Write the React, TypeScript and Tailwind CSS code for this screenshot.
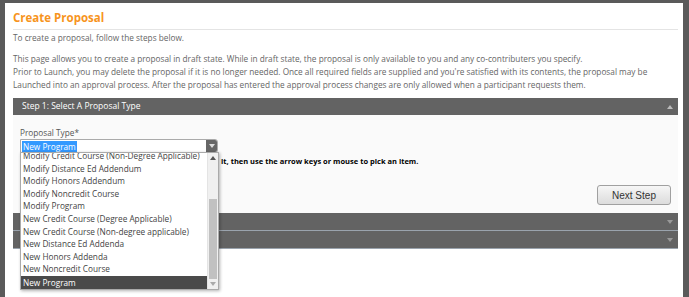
import React from "react";

const items = [
  "Modify Credit Course (Non-Degree Applicable)",
  "Modify Distance Ed Addendum",
  "Modify Honors Addendum",
  "Modify Noncredit Course",
  "Modify Program",
  "New Credit Course (Degree Applicable)",
  "New Credit Course (Non-degree applicable)",
  "New Distance Ed Addenda",
  "New Honors Addenda",
  "New Noncredit Course",
  "New Program",
];

function Tri({ up, className }: { up?: boolean; className?: string }) {
  return (
    <svg width="6" height="4" viewBox="0 0 6 4" className={className}>
      {up ? <path d="M0 4 L3 0 L6 4 Z" fill="currentColor" /> : <path d="M0 0 L6 0 L3 4 Z" fill="currentColor" />}
    </svg>
  );
}

export default function App() {
  const font = { fontFamily: '"Open Sans", "Noto Sans", sans-serif' };
  return (
    <div className="h-[297px] bg-[#5a5a5a] pt-[3px] pl-[5px] pr-[6px] overflow-hidden" style={font}>
      <div className="bg-white h-full pl-[8px] pr-[5px] pt-[6px]">
        <div className="text-[#f7941d] font-bold text-[11.5px] leading-[18px]">Create Proposal</div>
        <div className="border-b border-[#e4e4e4] mt-[2px]" />
        <div className="text-[#666] text-[8.25px] leading-[13px] mt-[1px]">
          <p>To create a proposal, follow the steps below.</p>
          <p className="mt-[8px]">
            This page allows you to create a proposal in draft state. While in draft state, the proposal is only available to you and any co-contributers you specify.
            <br />
            Prior to Launch, you may delete the proposal if it is no longer needed. Once all required fields are supplied and you're satisfied with its contents, the proposal may be
            <br />
            Launched into an approval process. After the proposal has entered the approval process changes are only allowed when a participant requests them.
          </p>
        </div>
        <div className="mt-[7px] bg-[#636363] h-[17px] flex items-center justify-between pl-[9px] pr-[5px] text-white text-[8.5px]">
          <span>Step 1: Select A Proposal Type</span>
          <Tri up className="text-[#bbb]" />
        </div>
        <div className="bg-[#fafafa] h-[98px] relative px-[7px] pt-[12px]">
          <div className="text-[#555] text-[8.25px] leading-[12px]">Proposal Type*</div>
          <div className="flex items-center h-[14px] w-[198px] border border-[#aaa] bg-white rounded-r-[3px]">
            <span className="ml-[1px] bg-[#3399ff] text-white text-[8.25px] leading-[11px] px-[1px]">New Program</span>
            <span className="ml-auto h-full w-[11px] bg-[#666] rounded-r-[2px] flex items-center justify-center">
              <Tri className="text-[#ddd]" />
            </span>
          </div>
          <div className="ml-[201px] mt-[2px] text-black font-bold text-[7.5px] leading-[12px]">
            it, then use the arrow keys or mouse to pick an item.
          </div>
          <div className="absolute right-[7px] top-[70px] w-[74px] h-[20px] rounded-[3px] border border-[#a0a0a0] bg-gradient-to-b from-[#f6f6f6] to-[#dcdcdc] flex items-center justify-center text-[#333] text-[10px]" style={{ fontFamily: '"Liberation Sans", Arial, sans-serif' }}>
            Next Step
          </div>
          <div className="absolute left-[7px] top-[37px] w-[199px] h-[138px] bg-white border border-[#aaa] shadow-[1px_1px_3px_rgba(0,0,0,0.3)] z-10 overflow-hidden flex">
            <div className="flex-1 overflow-hidden text-[#444] text-[8.25px] leading-[12.6px]">
              <div className="-mt-[3px]">
                {items.map((it, i) => (
                  <div
                    key={it}
                    className={
                      i === items.length - 1
                        ? "bg-[#4a4a4a] text-white pl-[2px] h-[13px] leading-[13px]"
                        : "pl-[2px] h-[12.6px]"
                    }
                  >
                    {it}
                  </div>
                ))}
              </div>
            </div>
            <div className="w-[11px] bg-[#f0f0f0] flex flex-col items-center border-l border-[#e4e4e4]">
              <div className="h-[10px] flex items-center"><Tri up className="text-[#555]" /></div>
              <div className="flex-1 w-full relative">
                <div className="absolute left-[1px] right-[1px] top-[36px] bottom-[0px] bg-[#c1c1c1]" />
              </div>
              <div className="h-[10px] flex items-center"><Tri className="text-[#aaa]" /></div>
            </div>
          </div>
        </div>
        <div className="bg-[#636363] h-[17px] flex items-center justify-end pr-[5px]">
          <Tri className="text-[#999]" />
        </div>
        <div className="h-[1px] bg-[#9aa3ad]" />
        <div className="bg-[#636363] h-[17px] flex items-center justify-end pr-[5px]">
          <Tri className="text-[#999]" />
        </div>
        <div className="h-[1px] bg-[#9aa3ad]" />
      </div>
    </div>
  );
}
